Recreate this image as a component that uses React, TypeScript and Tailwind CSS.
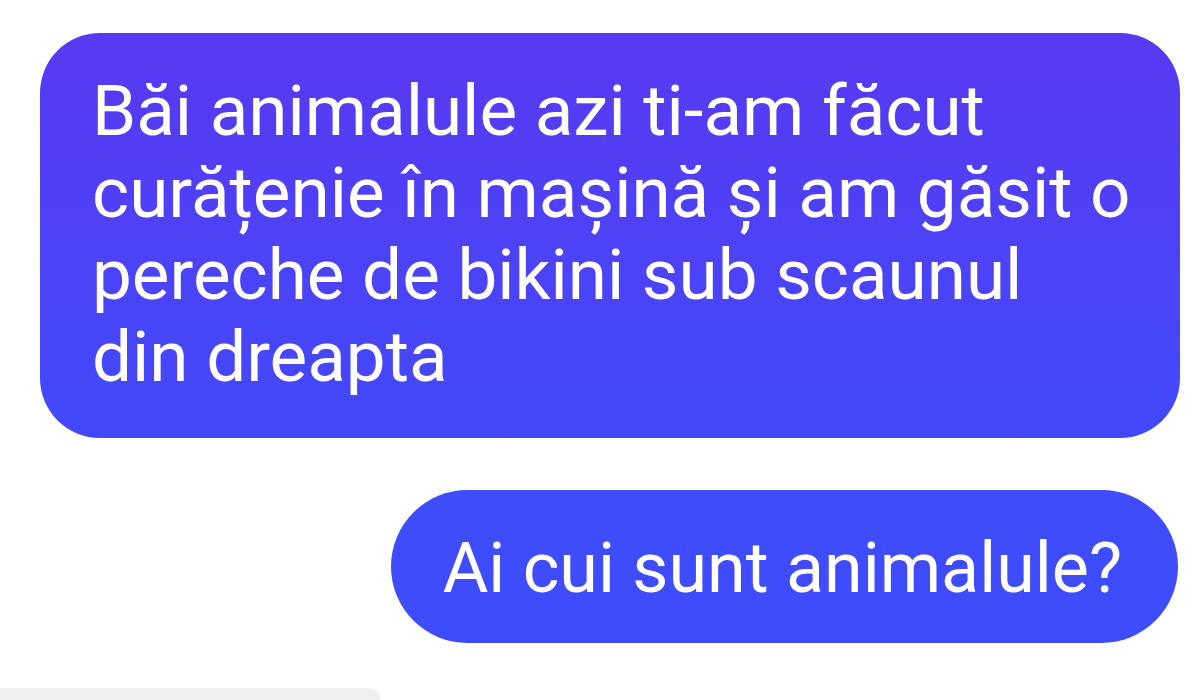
const font = { fontFamily: 'Roboto, "Noto Sans", sans-serif' }

export default function App() {
  return (
    <div className="relative flex h-[700px] w-[1200px] flex-col overflow-hidden bg-white" style={font}>
      <div className="ml-[40px] mr-[20px] mt-[33px] rounded-[60px] bg-gradient-to-b from-[#5739f1] to-[#4149fb] pb-[40px] pl-[52px] pr-[30px] pt-[37px]">
        <p className="text-[71px] leading-[82px] text-white">
          Băi animalule azi ti-am făcut
          <br />
          curățenie în mașină și am găsit o
          <br />
          pereche de bikini sub scaunul
          <br />
          din dreapta
        </p>
      </div>

      <div className="mt-[52px] flex justify-end pr-[22px]">
        <div className="rounded-full bg-[#3f4cfb] pb-[34px] pl-[52px] pr-[56px] pt-[37px]">
          <p className="whitespace-nowrap text-[70px] leading-[82px] text-white">Ai cui sunt animalule?</p>
        </div>
      </div>

      <div className="absolute bottom-0 left-0 h-[12px] w-[380px] rounded-tr-[12px] bg-[#efefef]" />
    </div>
  )
}
